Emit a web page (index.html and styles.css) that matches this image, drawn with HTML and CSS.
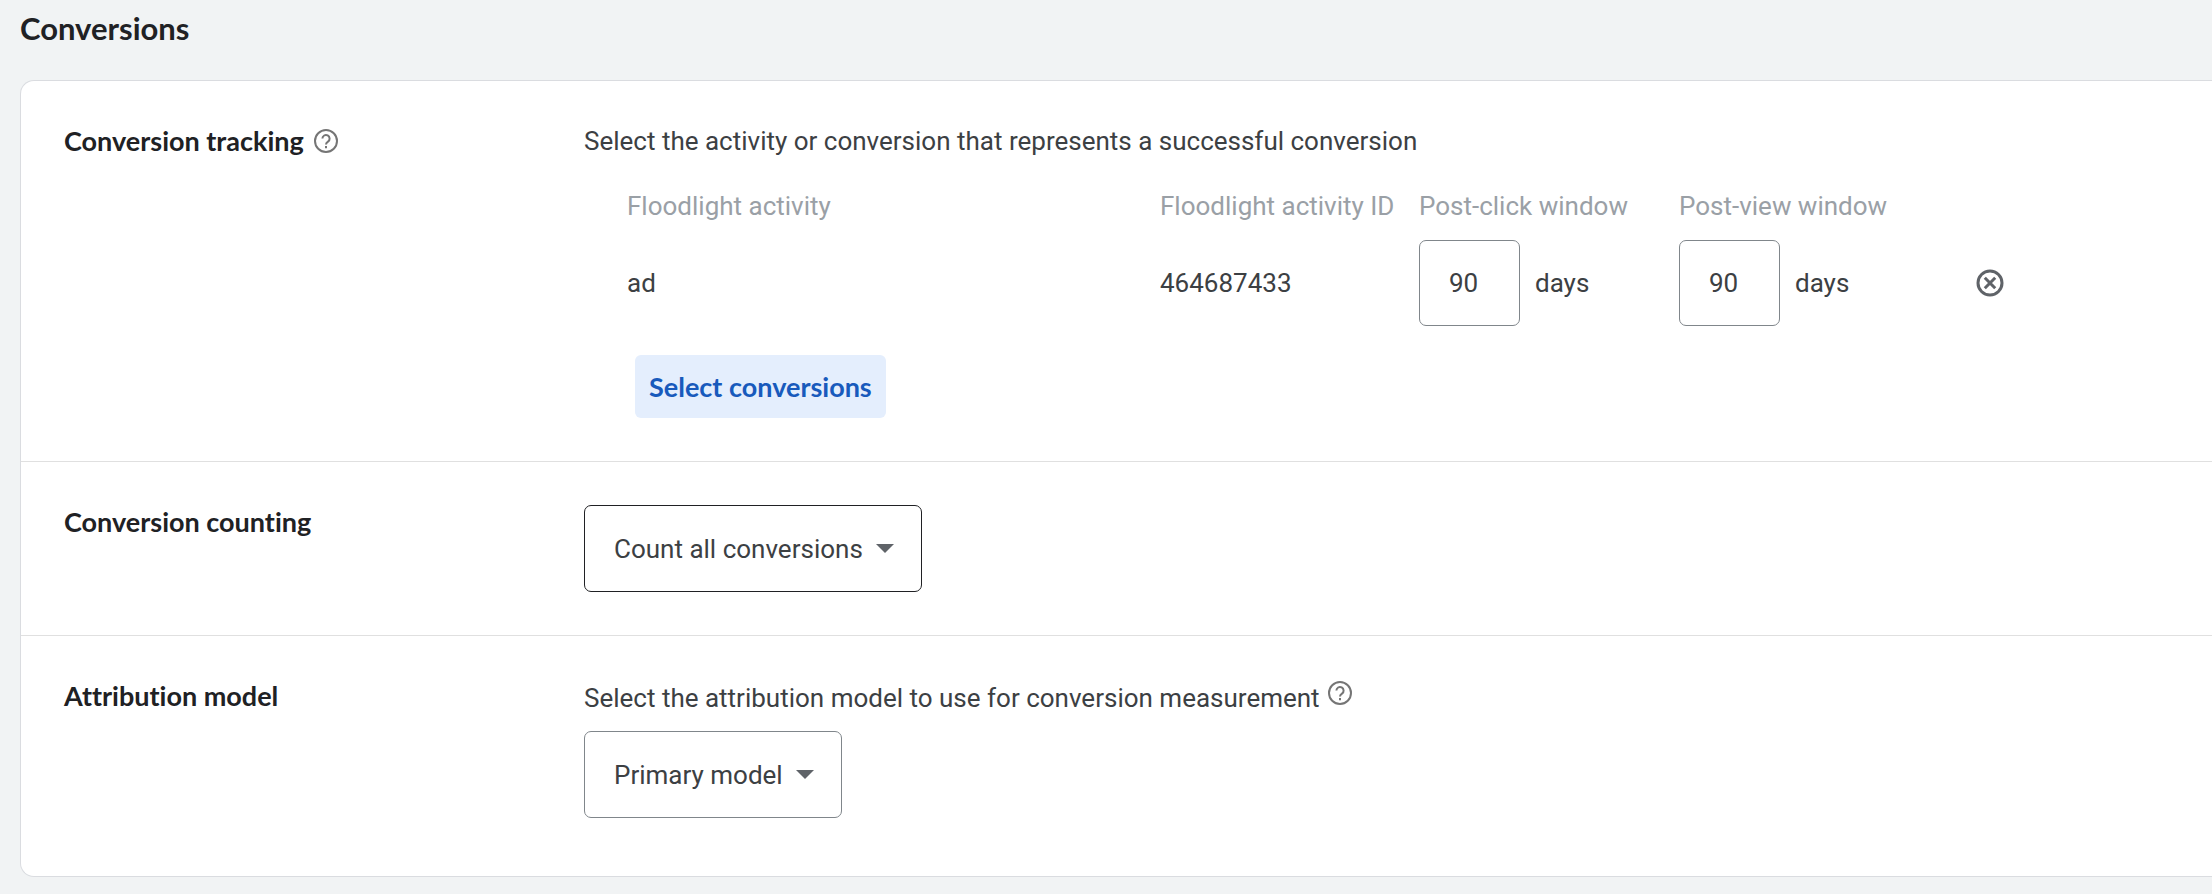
FILE: index.html
```
<!DOCTYPE html>
<html lang="en">
<head>
    <meta charset="utf-8">
    <title>Conversions</title>
    <link rel="stylesheet" href="styles.css">
</head>
<body>
    <h2 class="pageTitle">Conversions</h2>

    <div class="card">
        <section class="row">
            <h3 class="rowLabel">
                Conversion tracking
                <svg class="helpIcon" viewBox="0 0 24 24"><circle cx="12" cy="12" r="11"/><path d="M8.4 9.6a3.6 3.6 0 1 1 5.6 3c-1.2.8-2 1.5-2 3"/><path d="M12 17v2.2"/></svg>
            </h3>
            <div class="rowContent">
                <p class="hint">Select the activity or conversion that represents a successful conversion</p>
                <table class="activityTable">
                    <thead>
                        <tr>
                            <th class="colName">Floodlight activity</th>
                            <th class="colId">Floodlight activity ID</th>
                            <th class="colDays" id="postClick">Post-click window</th>
                            <th class="colDays" id="postView">Post-view window</th>
                            <td></td>
                        </tr>
                    </thead>
                    <tbody>
                        <tr>
                            <td>ad</td>
                            <td>464687433</td>
                            <td><div class="days"><input type="text" value="90" aria-labelledby="postClick">days</div></td>
                            <td><div class="days"><input type="text" value="90" aria-labelledby="postView">days</div></td>
                            <td class="colRemove">
                                <button class="removeButton" aria-label="Remove">
                                    <svg viewBox="0 0 28 28"><circle cx="14" cy="14" r="12"/><path d="M8.8 8.8l10.4 10.4M19.2 8.8L8.8 19.2"/></svg>
                                </button>
                            </td>
                        </tr>
                    </tbody>
                </table>
                <button class="selectButton">Select conversions</button>
            </div>
        </section>

        <section class="row">
            <h3 class="rowLabel"><label for="counting">Conversion counting</label></h3>
            <div class="rowContent">
                <div class="dropdown active">
                    <select id="counting">
                        <option>Count all conversions</option>
                    </select>
                    <svg class="arrow" viewBox="0 0 18 9"><path d="M0 0h18L9 9z"/></svg>
                </div>
            </div>
        </section>

        <section class="row lastRow">
            <h3 class="rowLabel"><label for="model">Attribution model</label></h3>
            <div class="rowContent">
                <p class="hint">
                    Select the attribution model to use for conversion measurement
                    <svg class="helpIcon raised" viewBox="0 0 24 24"><circle cx="12" cy="12" r="11"/><path d="M8.4 9.6a3.6 3.6 0 1 1 5.6 3c-1.2.8-2 1.5-2 3"/><path d="M12 17v2.2"/></svg>
                </p>
                <div class="dropdown">
                    <select id="model">
                        <option>Primary model</option>
                    </select>
                    <svg class="arrow" viewBox="0 0 18 9"><path d="M0 0h18L9 9z"/></svg>
                </div>
            </div>
        </section>
    </div>
</body>
</html>
```
FILE: styles.css
```
* {
    box-sizing: border-box;
}

body {
    font-family: Roboto, Arial, sans-serif;
    font-size: 26px;
    line-height: 32px;
    color: #3c4043;
    background-color: #f1f3f4;
    margin: 0;
    padding: 12px 0 16px 20px;
}

h2, h3, p {
    margin: 0;
}

.pageTitle,
.rowLabel,
.selectButton {
    font-family: Lato, sans-serif;
    font-size: 27px;
    font-weight: 700;
    font-variant-ligatures: none;
}

.pageTitle {
    font-size: 31px;
    color: #202124;
    margin-bottom: 36px;
}

/* the card runs off the right edge */
.card {
    background-color: #fff;
    border: 1px solid #dadce0;
    border-right: none;
    border-radius: 14px 0 0 14px;
}

.row {
    display: flex;
    padding: 43px 0 43px 43px;
    border-bottom: 1px solid #e0e0e0;
}

.lastRow {
    padding-bottom: 58px;
    border-bottom: none;
}

.rowLabel {
    display: flex;
    align-items: center;
    gap: 10px;
    flex: 0 0 520px;
    height: 34px;
    color: #202124;
}

.rowContent {
    flex: 1;
}

.hint {
    display: flex;
    align-items: center;
    gap: 8px;
    height: 34px;
}

.lastRow .hint {
    height: 38px;
    margin-bottom: 14px;
}

.helpIcon {
    width: 24px;
    height: 24px;
    fill: none;
    stroke: #757575;
    stroke-width: 2;
}

.raised {
    margin-bottom: 10px;
}

.activityTable {
    border-collapse: collapse;
    table-layout: fixed;
    margin: 32px 0 29px 43px;
}

.activityTable th,
.activityTable td {
    padding: 0;
    text-align: left;
    white-space: nowrap;
}

.activityTable th {
    font-weight: 400;
    color: #9aa0a6;
    padding-bottom: 18px;
}

.colName {
    width: 533px;
}

.colId {
    width: 259px;
}

.colDays {
    width: 260px;
}

.days {
    display: flex;
    align-items: center;
    gap: 15px;
}

.days input {
    width: 101px;
    height: 86px;
    padding: 0 29px;
    font: inherit;
    color: inherit;
    background-color: #fff;
    border: 1px solid #80868b;
    border-radius: 7px;
}

.activityTable .colRemove {
    padding-left: 37px;
}

.removeButton {
    display: block;
    width: 28px;
    height: 28px;
    padding: 0;
    border: none;
    background: none;
    cursor: pointer;
}

.removeButton svg {
    display: block;
    fill: none;
    stroke: #5f6368;
    stroke-width: 3;
}

.selectButton {
    display: block;
    height: 63px;
    margin-left: 51px;
    padding: 0 14px;
    color: #185abc;
    background-color: #e4eefd;
    border: none;
    border-radius: 6px;
    cursor: pointer;
}

.dropdown {
    display: inline-grid;
    align-items: center;
    vertical-align: top;
}

.dropdown select {
    grid-area: 1 / 1;
    appearance: none;
    height: 87px;
    padding: 0 58px 0 29px;
    font: inherit;
    color: inherit;
    background-color: #fff;
    border: 1px solid #80868b;
    border-radius: 7px;
    cursor: pointer;
}

.active select {
    border-color: #202124;
}

.arrow {
    grid-area: 1 / 1;
    justify-self: end;
    width: 18px;
    height: 9px;
    margin-right: 28px;
    fill: #5f6368;
    pointer-events: none;
}
```
